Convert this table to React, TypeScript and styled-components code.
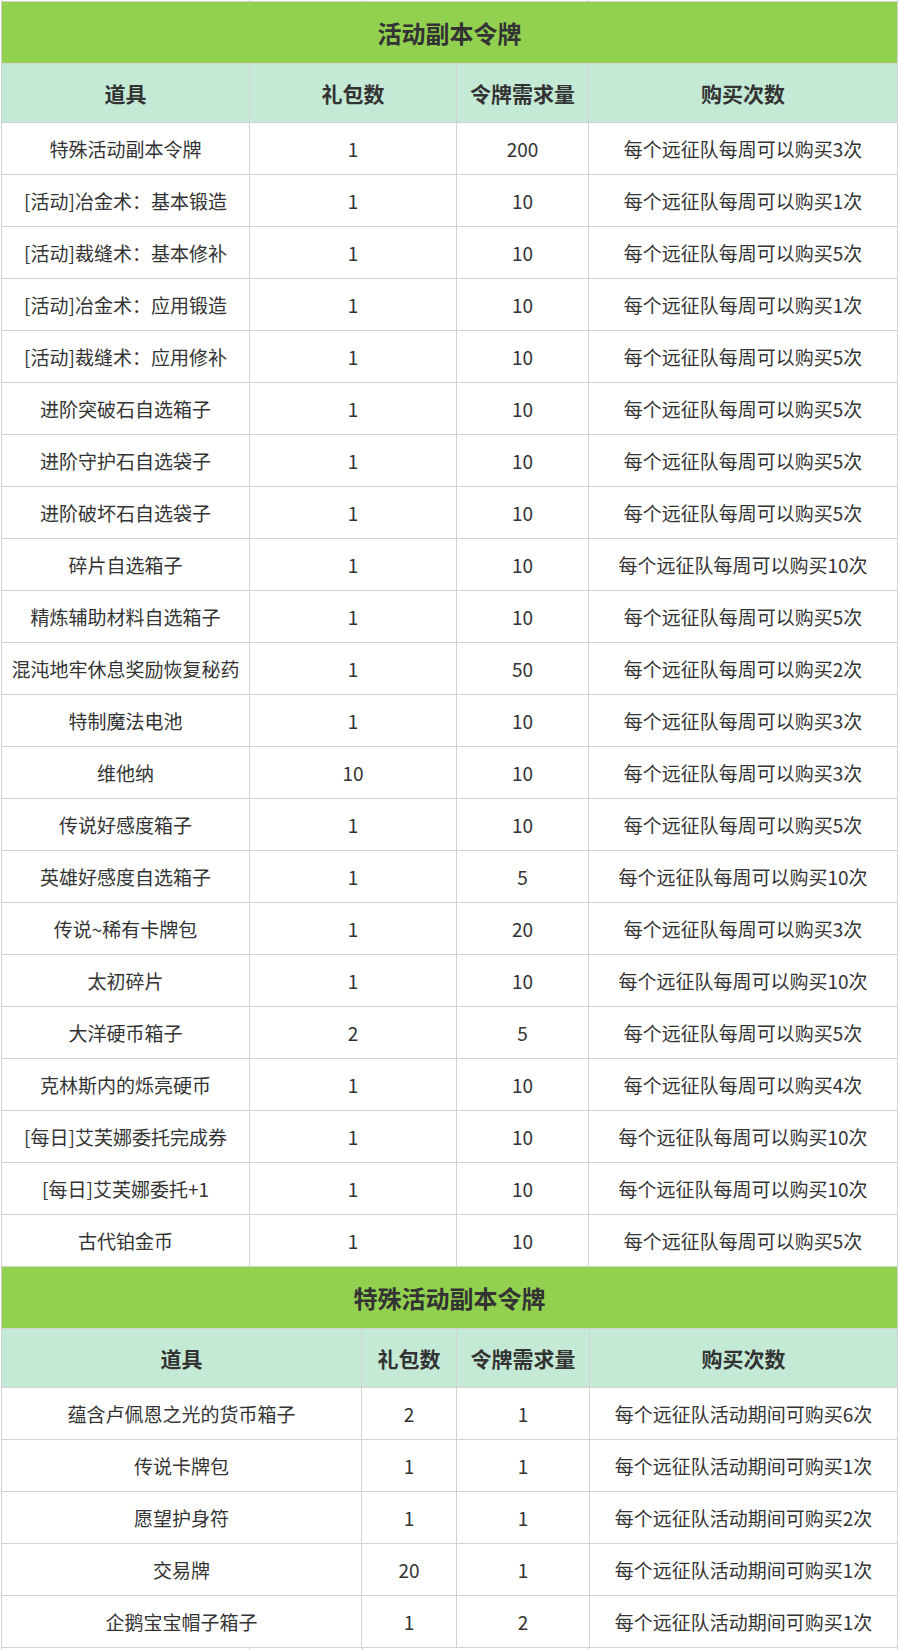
import styled, { createGlobalStyle } from 'styled-components';

const GlobalStyle = createGlobalStyle`
  html, body {
    margin: 0;
    padding: 0;
    background: #ffffff;
  }
  body {
    font-family: "Noto Sans CJK SC", "Noto Sans", sans-serif;
    color: #333333;
  }
`;

const Page = styled.div`
  width: 897px;
  margin-left: 1px;
  display: flex;
  flex-direction: column;
`;

const Grid = styled.div<{ $cols: string; $noTop?: boolean }>`
  display: grid;
  grid-template-columns: ${(p) => p.$cols};
  gap: 1px;
  padding: 1px;
  padding-top: ${(p) => (p.$noTop ? '0' : '1px')};
  background: #d2d2d2;
`;

const Tail = styled.div<{ $cols: string; $h: number }>`
  display: grid;
  grid-template-columns: ${(p) => p.$cols};
  column-gap: 1px;
  padding: 0 1px;
  height: ${(p) => p.$h}px;
  background: #d2d2d2;

  & > div {
    background: #ffffff;
  }
`;

const Title = styled.div`
  grid-column: 1 / -1;
  height: 61px;
  background: #92d050;
  display: flex;
  align-items: center;
  justify-content: center;
  font-size: 24px;
  font-weight: 700;
  color: #333333;
`;

const HeadCell = styled.div`
  height: 58px;
  background: #c4ead6;
  display: flex;
  align-items: center;
  justify-content: center;
  font-size: 21px;
  font-weight: 700;
  color: #333333;
  white-space: nowrap;
`;

const Cell = styled.div`
  height: 51px;
  background: #ffffff;
  display: flex;
  align-items: center;
  justify-content: center;
  font-size: 19px;
  color: #333333;
  white-space: nowrap;
  padding: 0 2px;
`;

const HEADS = ['道具', '礼包数', '令牌需求量', '购买次数'];

const weekly = (n: number) => `每个远征队每周可以购买${n}次`;
const event = (n: number) => `每个远征队活动期间可购买${n}次`;

const normalRows: [string, number, number, string][] = [
  ['特殊活动副本令牌', 1, 200, weekly(3)],
  ['[活动]冶金术：基本锻造', 1, 10, weekly(1)],
  ['[活动]裁缝术：基本修补', 1, 10, weekly(5)],
  ['[活动]冶金术：应用锻造', 1, 10, weekly(1)],
  ['[活动]裁缝术：应用修补', 1, 10, weekly(5)],
  ['进阶突破石自选箱子', 1, 10, weekly(5)],
  ['进阶守护石自选袋子', 1, 10, weekly(5)],
  ['进阶破坏石自选袋子', 1, 10, weekly(5)],
  ['碎片自选箱子', 1, 10, weekly(10)],
  ['精炼辅助材料自选箱子', 1, 10, weekly(5)],
  ['混沌地牢休息奖励恢复秘药', 1, 50, weekly(2)],
  ['特制魔法电池', 1, 10, weekly(3)],
  ['维他纳', 10, 10, weekly(3)],
  ['传说好感度箱子', 1, 10, weekly(5)],
  ['英雄好感度自选箱子', 1, 5, weekly(10)],
  ['传说~稀有卡牌包', 1, 20, weekly(3)],
  ['太初碎片', 1, 10, weekly(10)],
  ['大洋硬币箱子', 2, 5, weekly(5)],
  ['克林斯内的烁亮硬币', 1, 10, weekly(4)],
  ['[每日]艾芙娜委托完成券', 1, 10, weekly(10)],
  ['[每日]艾芙娜委托+1', 1, 10, weekly(10)],
  ['古代铂金币', 1, 10, weekly(5)],
];

const specialRows: [string, number, number, string][] = [
  ['蕴含卢佩恩之光的货币箱子', 2, 1, event(6)],
  ['传说卡牌包', 1, 1, event(1)],
  ['愿望护身符', 1, 1, event(2)],
  ['交易牌', 20, 1, event(1)],
  ['企鹅宝宝帽子箱子', 1, 2, event(1)],
];

const TAIL_COLS = '247px 112px 225px 308px';

function TokenTable({
  title,
  cols,
  rows,
  noTop,
}: {
  title: string;
  cols: string;
  rows: [string, number, number, string][];
  noTop?: boolean;
}) {
  return (
    <Grid $cols={cols} $noTop={noTop}>
      <Title>{title}</Title>
      {HEADS.map((h) => (
        <HeadCell key={h}>{h}</HeadCell>
      ))}
      {rows.map((r, i) =>
        r.map((v, j) => <Cell key={`${i}-${j}`}>{v}</Cell>)
      )}
    </Grid>
  );
}

export default function App() {
  return (
    <>
      <GlobalStyle />
      <Page>
        <Tail $cols={TAIL_COLS} $h={1}>
          <div />
          <div />
          <div />
          <div />
        </Tail>
        <TokenTable
          title="活动副本令牌"
          cols="247px 206px 131px 308px"
          rows={normalRows}
        />
        <TokenTable
          title="特殊活动副本令牌"
          cols="359px 94px 132px 307px"
          rows={specialRows}
          noTop
        />
        <Tail $cols={TAIL_COLS} $h={3}>
          <div />
          <div />
          <div />
          <div />
        </Tail>
      </Page>
    </>
  );
}
